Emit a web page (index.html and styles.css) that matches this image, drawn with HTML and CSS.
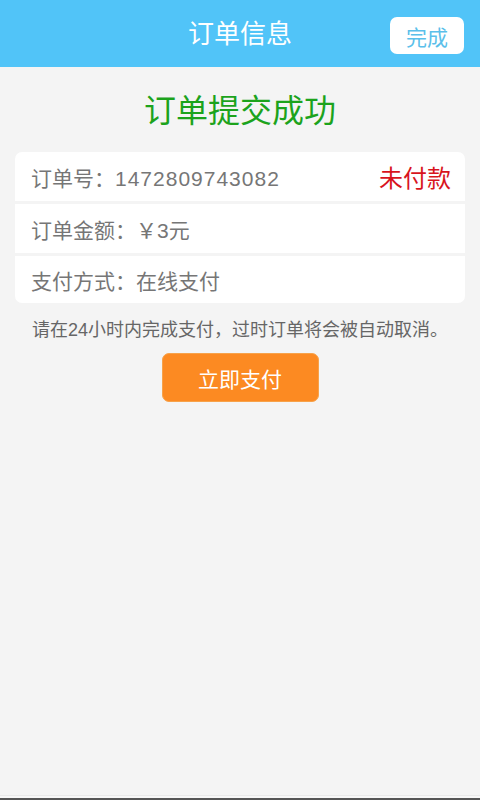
FILE: index.html
```html
<!DOCTYPE html>
<html lang="zh-CN">
<head>
    <meta charset="UTF-8">
    <meta name="viewport" content="width=device-width, initial-scale=1.0">
    <title>订单信息</title>
    <link rel="stylesheet" href="styles.css">
</head>
<body>
    <div class="page">
        <div class="topbar">
            <h1 class="topbar-title">订单信息</h1>
            <button class="done-btn">完成</button>
        </div>

        <div class="content">
            <h2 class="result-title">订单提交成功</h2>

            <div class="order-card">
                <div class="order-row">
                    <span class="order-label">订单号：<span class="order-no">1472809743082</span></span>
                    <span class="order-status">未付款</span>
                </div>
                <div class="order-row">
                    <span class="order-label">订单金额：￥3元</span>
                </div>
                <div class="order-row">
                    <span class="order-label">支付方式：在线支付</span>
                </div>
            </div>

            <p class="order-tip">请在24小时内完成支付，过时订单将会被自动取消。</p>

            <div class="pay-wrap">
                <button class="pay-btn">立即支付</button>
            </div>
        </div>

        <div class="bottom-edge"></div>
    </div>
</body>
</html>
```

FILE: styles.css
```css
* {
    box-sizing: border-box;
}

body {
    margin: 0;
    padding: 0;
    font-family: "Liberation Sans", "Noto Sans CJK SC", sans-serif;
    background: #f4f4f4;
    color: #777;
}

.page {
    display: flex;
    flex-direction: column;
    min-height: 100vh;
}

/* top bar */
.topbar {
    height: 67px;
    background: #51c4f8;
    display: flex;
    align-items: center;
    justify-content: center;
    position: relative;
}

.topbar-title {
    margin: 0;
    font-size: 26px;
    font-weight: normal;
    color: #fff;
    line-height: 1;
}

.done-btn {
    position: absolute; /* sits over the bar, right side */
    right: 16px;
    top: 17px;
    width: 74px;
    height: 37px;
    border: none;
    border-radius: 7px;
    background: #fff;
    color: #5bbfea;
    font-family: "Liberation Sans", "Noto Sans CJK SC", sans-serif;
    font-size: 21px;
    padding: 0;
}

/* main content */
.content {
    flex: 1;
    padding: 0 15px;
}

.result-title {
    margin: 24px 0 0;
    height: 40px;
    line-height: 40px;
    text-align: center;
    font-size: 32px;
    font-weight: normal;
    color: #1ca31c;
}

.order-card {
    margin-top: 21px;
    background: #fff;
    border-radius: 7px;
    overflow: hidden;
}

.order-row {
    height: 49px;
    display: flex;
    align-items: center;
    justify-content: space-between;
    padding: 0 14px 0 16px;
    font-size: 21px;
}

.order-row + .order-row {
    height: 52px;
    border-top: 3px solid #f4f4f4;
}

.order-row:last-child {
    height: 50px;
}

.order-label {
    color: #767676;
}

.order-no {
    letter-spacing: 1px;
}

.order-status {
    font-size: 24px;
    color: #d8141d;
}

.order-tip {
    margin: 15px 0 0;
    height: 24px;
    line-height: 24px;
    text-align: center;
    font-size: 18px;
    color: #666;
    white-space: nowrap;
}

.pay-wrap {
    display: flex;
    justify-content: center;
    margin-top: 11px;
}

.pay-btn {
    width: 157px;
    height: 49px;
    border: 1px solid #f7a24a;
    border-radius: 7px;
    background: #fc8a22;
    color: #fff;
    font-family: "Liberation Sans", "Noto Sans CJK SC", sans-serif;
    font-size: 21px;
    padding: 0;
}

.bottom-edge {
    height: 5px;
    border-top: 1px solid #e9e9e9;
    border-bottom: 2px solid #555;
    background: #f7f7f7;
}
```
